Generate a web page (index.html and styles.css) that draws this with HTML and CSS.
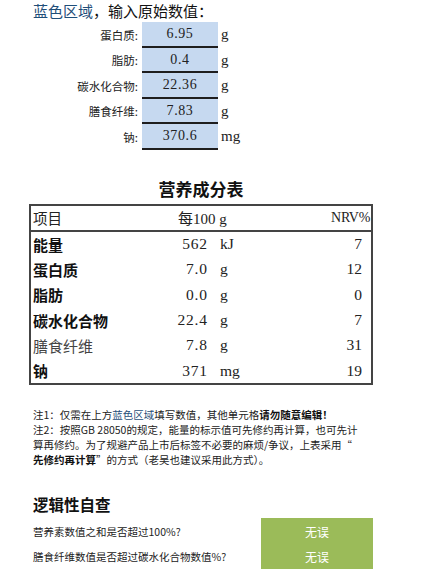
FILE: index.html
```html
<!DOCTYPE html>
<html lang="zh">
<head>
<meta charset="utf-8">
<title>营养成分表</title>
<link rel="stylesheet" href="styles.css">
</head>
<body>
<div class="page">
  <h1 class="input-title"><span class="blue">蓝色区域</span>，输入原始数值：</h1>
  <div class="inputs">
    <div class="in-label">蛋白质:</div><div class="in-cell">6.95</div><div class="in-unit">g</div>
    <div class="in-label">脂肪:</div><div class="in-cell">0.4</div><div class="in-unit">g</div>
    <div class="in-label">碳水化合物:</div><div class="in-cell">22.36</div><div class="in-unit">g</div>
    <div class="in-label">膳食纤维:</div><div class="in-cell">7.83</div><div class="in-unit">g</div>
    <div class="in-label">钠:</div><div class="in-cell">370.6</div><div class="in-unit">mg</div>
  </div>

  <div class="table-wrap">
    <h2 class="table-title">营养成分表</h2>
    <div class="nt">
      <div class="nt-head"><span class="h-name">项目</span><span class="h-per">每100 g</span><span class="h-nrv">NRV%</span></div>
      <div class="nt-row"><span class="n b">能量</span><span class="v">562</span><span class="u">kJ</span><span class="p">7</span></div>
      <div class="nt-row"><span class="n b">蛋白质</span><span class="v">7.0</span><span class="u">g</span><span class="p">12</span></div>
      <div class="nt-row"><span class="n b">脂肪</span><span class="v">0.0</span><span class="u">g</span><span class="p">0</span></div>
      <div class="nt-row"><span class="n b">碳水化合物</span><span class="v">22.4</span><span class="u">g</span><span class="p">7</span></div>
      <div class="nt-row"><span class="n light">膳食纤维</span><span class="v">7.8</span><span class="u">g</span><span class="p">31</span></div>
      <div class="nt-row"><span class="n b">钠</span><span class="v">371</span><span class="u">mg</span><span class="p">19</span></div>
    </div>
  </div>

  <div class="notes">
    <p class="note">注1：仅需在上方<span class="blue">蓝色区域</span>填写数值，其他单元格<strong>请勿随意编辑！</strong></p>
    <p class="note">注2：按照GB 28050的规定，能量的标示值可先修约再计算，也可先计<br>算再修约。为了规避产品上市后标签不必要的麻烦/争议，上表采用“<br><strong>先修约再计算</strong>”的方式（老吴也建议采用此方式）。</p>
  </div>

  <h3 class="check-title">逻辑性自查</h3>
  <div class="checks">
    <div class="q">营养素数值之和是否超过100%?</div><div class="ok">无误</div>
    <div class="q">膳食纤维数值是否超过碳水化合物数值%?</div><div class="ok">无误</div>
  </div>
</div>
</body>
</html>
```
FILE: styles.css
```css
html, body {
  margin: 0;
  padding: 0;
  background: #ffffff;
}

.page {
  padding-top: 1px;
  font-family: "Liberation Serif", "Noto Sans CJK SC", serif;
  color: #111;
}

.blue {
  color: #1f4e79;
}

.input-title {
  margin: 0 0 0 33px;
  font-family: "Noto Sans CJK SC", sans-serif;
  font-size: 15px;
  line-height: 20px;
  font-weight: normal;
  color: #111;
}

.inputs {
  margin-top: 1px;
  display: grid;
  grid-template-columns: 138px 76px 1fr;
  grid-auto-rows: 25.5px;
  column-gap: 4px;
}

.in-label {
  font-family: "Noto Sans CJK SC", sans-serif;
  font-size: 11.5px;
  text-align: right;
  display: flex;
  align-items: center;
  justify-content: flex-end;
  color: #222;
}

.in-cell {
  background: #c6d9f0;
  border-bottom: 2px solid #1e1e1e;
  box-sizing: border-box;
  display: flex;
  align-items: center;
  justify-content: center;
  font-size: 14px;
  letter-spacing: 0.6px;
  color: #222;
  padding-top: 1px;
}

.in-unit {
  display: flex;
  align-items: center;
  font-size: 15px;
  margin-left: -1px;
  color: #222;
}

.table-wrap {
  margin-left: 29px;
  width: 344px;
}

.table-title {
  margin: 28px 0 4px;
  text-align: center;
  font-family: "Noto Sans CJK SC", sans-serif;
  font-weight: bold;
  font-size: 17px;
  line-height: 22px;
  color: #111;
}

.nt {
  border: 2px solid #444;
  box-sizing: border-box;
}

.nt-head {
  display: grid;
  grid-template-columns: 147px 1fr auto;
  align-items: center;
  height: 24px;
  border-bottom: 2px solid #444;
  font-size: 15px;
  color: #222;
}

.h-name {
  padding-left: 2px;
  font-family: "Noto Sans CJK SC", sans-serif;
  font-size: 14.5px;
}

.h-per {
  font-family: "Liberation Serif", "Noto Sans CJK SC", serif;
}

.h-nrv {
  padding-right: 1px;
  font-size: 14px;
  letter-spacing: -0.3px;
}

.nt-row {
  display: grid;
  grid-template-columns: 119px 57px 13px 40px 1fr;
  align-items: center;
  height: 25.3px;
  font-size: 15.5px;
  color: #222;
}

.nt-row .n {
  grid-column: 1;
  padding-left: 2px;
  font-family: "Noto Sans CJK SC", sans-serif;
  font-size: 15px;
}

.nt-row .n.b {
  font-weight: bold;
  color: #111;
}

.nt-row .n.light {
  font-weight: normal;
  color: #444;
}

.nt-row .v {
  grid-column: 2;
  text-align: right;
  letter-spacing: 0.8px;
  margin-right: -0.8px;
}

.nt-row .u {
  grid-column: 4;
}

.nt-row .p {
  grid-column: 5;
  text-align: right;
  padding-right: 9px;
}

.notes {
  margin: 22px 0 0 33px;
  font-family: "Noto Sans CJK SC", sans-serif;
  font-size: 10.5px;
  line-height: 15px;
  color: #222;
  white-space: nowrap;
}

.note {
  margin: 0;
}

.note strong {
  font-weight: bold;
  color: #111;
}

.check-title {
  margin: 26px 0 3px 33px;
  font-family: "Noto Sans CJK SC", sans-serif;
  font-size: 15.5px;
  line-height: 22px;
  font-weight: bold;
  color: #111;
}

.checks {
  display: grid;
  grid-template-columns: 228px 112px;
  grid-auto-rows: 25.5px;
  margin-left: 33px;
}

.q {
  display: flex;
  align-items: center;
  font-family: "Noto Sans CJK SC", sans-serif;
  font-size: 10.5px;
  color: #222;
}

.ok {
  background: #9bbb59;
  color: #ffffff;
  display: flex;
  align-items: center;
  justify-content: center;
  font-family: "Noto Sans CJK SC", sans-serif;
  font-size: 12px;
}
```
